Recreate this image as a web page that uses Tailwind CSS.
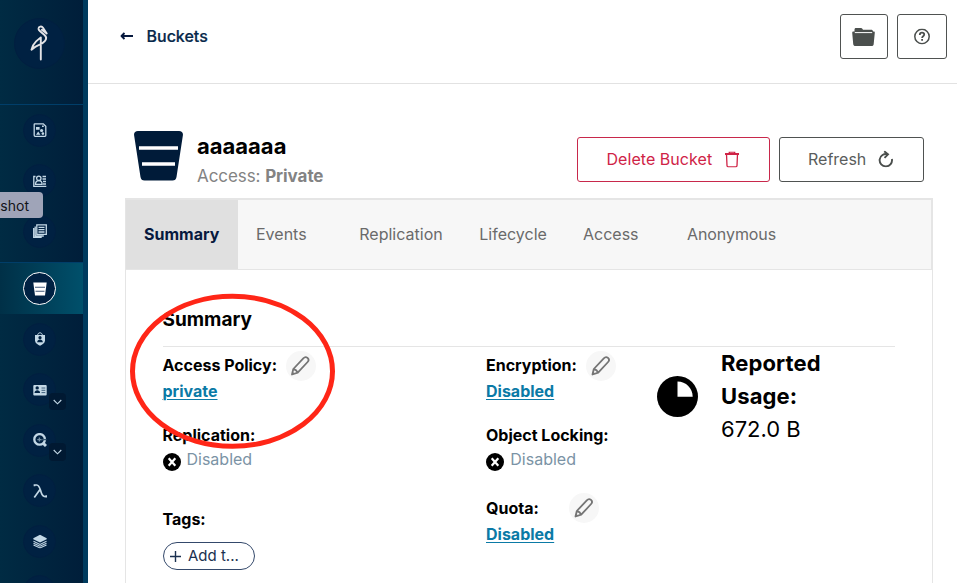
<!DOCTYPE html>
<html lang="en">
<head>
<meta charset="utf-8">
<title>Buckets</title>
<script src="https://cdn.jsdelivr.net/npm/@tailwindcss/browser@4"></script>
</head>
<body class="w-[957px] h-[583px] overflow-hidden bg-white font-['Inter',sans-serif] text-base text-black">
<svg class="hidden">
  <symbol id="pencil" viewBox="0 0 20 20"><path d="M1.500 18.500 2.800 13 12.800 2.300c1.400-1.500 3-1.400 4.200-.4 1.300 1.200 1.300 2.800.1 4.100L7.200 16.700ZM2.800 13c1.700.4 3.600 1.700 4.400 3.700" fill="none" stroke="currentColor" stroke-width="1.800" stroke-linejoin="round"/><path d="m1.500 18.500.6-2.800 2.300 2Z" fill="currentColor"/></symbol>
  <symbol id="off" viewBox="0 0 18 18"><circle cx="9" cy="9" r="9"/><path d="m5.700 5.200 6.600 7.600m0-7.600-6.600 7.600" stroke="#fff" stroke-width="2.200"/></symbol>
</svg>
<div class="relative flex h-[583px] overflow-hidden">
  <aside class="relative flex w-[88px] shrink-0 flex-col overflow-hidden border-r-[5px] border-[#003b5e] bg-linear-to-r from-[#002b43] to-[#001e3a] text-[#c3d8e6]">
    <div class="h-[105px] shrink-0 border-b border-[#003e69] pl-[14px] pt-[18px]">
      <div class="size-[51px] rounded-full border border-[#001f40] bg-[#002142]">
        <svg class="size-[49px]" viewBox="0 0 49 49" fill="none" stroke="#e3e3e6" stroke-width="1.900" stroke-linejoin="round" stroke-linecap="round"><path d="M31.700 14.500 28 8.700c-1.300-1.900-4.600-1.300-4.500 1.200.1 1 .8 1.700 1.600 2.400l4.400 3.700c1.900 1.700 2 4.200.3 6.200-1.300 1.500-3 2.600-5.200 3.500-2.600 1-5 2.400-8.100 5 .8-3.400 2.200-6 4.600-8.300l4.700-4V40.500M26.800 10.800l4.900 3.700" /></svg>
      </div>
    </div>
    <nav class="flex flex-col">
      <a class="flex h-[50px] shrink-0 items-center pl-[23px]"><span class="grid size-[33px] place-items-center rounded-full border border-[#001f40] bg-[#002142]"><svg class="size-[14px]" viewBox="0 0 14 14"><path d="M1.700.8h8.600l2.500 2.500v9.200c0 .5-.3.800-.9.800H2.200c-.7 0-1-.4-1-1V1.500c0-.4.200-.7.500-.7Z" fill="none" stroke="currentColor" stroke-width="1.300"/><path d="M3 4h3.600v2.800H3zM3 11.700l2.200-3.200 2.200 3.200zM9 2.500h1.800v1.600H9z" fill="currentColor"/><circle cx="8.600" cy="7.500" r="1.600" fill="currentColor"/><circle cx="9.900" cy="10.600" r="1.300" fill="currentColor"/></svg></span></a>
      <a class="flex h-[51px] shrink-0 items-center pl-[23px]"><span class="grid size-[33px] place-items-center rounded-full border border-[#001f40] bg-[#002142]"><svg class="size-[14px]" viewBox="0 0 14 14" fill="none" stroke="currentColor" stroke-width="1.300"><path d="M2.500 2.500H.8v9.800h12.500M9.500 2.500H13M9.500 5H13M10 7.500h3M10 10h3"/><circle cx="5.800" cy="4.300" r="2.200"/><path d="M2.500 10.300c0-2.400 1.300-3.700 3.300-3.700s3.300 1.300 3.300 3.700Z"/></svg></span></a>
      <a class="flex h-[50px] shrink-0 items-center pl-[23px]"><span class="grid size-[33px] place-items-center rounded-full border border-[#001f40] bg-[#002142]"><svg class="size-[14px]" viewBox="0 0 14 14" fill="none" stroke="currentColor" stroke-width="1.300"><path d="M3.800.8h9.500v9.500H3.800zM5.500 3.300h6M5.500 5.600h6M5.500 8h6M2.200 2.500v9.500h8.600M.7 4v9.400h8"/></svg></span></a>
      <a class="mt-[6px] flex h-[52px] shrink-0 items-center border-t border-[#003e69] bg-linear-to-r from-[#003047] to-[#00506b] pl-[23px]"><span class="grid size-[33px] place-items-center rounded-full border border-white bg-[#002142]"><svg class="size-[14px]" viewBox="0 0 14 14"><path d="M.3.500h13.400l-1.700 13H2z" fill="#fff"/><path d="M2 5.200h10M2.500 9.200h9" stroke="#405878" stroke-width="1.100"/></svg></span></a>
      <a class="flex h-[50px] shrink-0 items-center pl-[23px]"><span class="grid size-[33px] place-items-center rounded-full border border-[#001f40] bg-[#002142]"><svg class="size-[14px]" viewBox="0 0 14 14"><path d="M4.600 3.500c0-3.600 4.800-3.600 4.800 0" fill="none" stroke="currentColor"/><path d="M2 2.900h10v5.600c0 2.400-2.400 4.100-5 5.300-2.600-1.200-5-2.900-5-5.300z" fill="currentColor"/><circle cx="7" cy="5.700" r="1.600" fill="#002142"/><path d="M4.200 10.200c0-3.600 5.600-3.600 5.600 0z" fill="#002142"/></svg></span></a>
      <a class="relative flex h-[51px] shrink-0 items-center pl-[23px]"><span class="grid size-[33px] place-items-center rounded-full border border-[#001f40] bg-[#002142]"><svg class="size-[14px]" viewBox="0 0 14 14"><rect x=".3" y="2" width="13.400" height="10.400" rx="1" fill="currentColor"/><circle cx="4.200" cy="4.900" r="1.700" fill="#002142"/><path d="M1.500 10c0-3.700 5.600-3.700 5.600 0z" fill="#002142"/><path d="M8.500 5h3.800M8.500 7.300h3.800M8.500 9.600h3.800" stroke="#315473" stroke-width=".9"/></svg></span><span class="absolute left-[49px] top-[29px] grid size-[17px] place-items-center rounded-sm bg-[#001932]"><svg class="h-[6px] w-[9px]" viewBox="0 0 9 6"><path d="m.7 1 3.800 3.800L8.300 1" fill="none" stroke="currentColor" stroke-width="1.100"/></svg></span></a>
      <a class="relative flex h-[50px] shrink-0 items-center pl-[23px]"><span class="grid size-[33px] place-items-center rounded-full border border-[#001f40] bg-[#002142]"><svg class="size-[14px]" viewBox="0 0 14 14" fill="none" stroke="currentColor"><circle cx="6.600" cy="6.400" r="5.300" stroke-width="2.300"/><path d="m10 10 3 3" stroke-width="3"/><path d="M4.300 6.600h4.500M6.400 4.600v4" stroke-width="1.400" opacity=".6"/><path d="M8.500 6.600h5" stroke="#36566f" stroke-width="1.300"/></svg></span><span class="absolute left-[49px] top-[28px] grid h-[18px] w-[17px] place-items-center rounded-sm bg-[#001932]"><svg class="h-[6px] w-[9px]" viewBox="0 0 9 6"><path d="m.7 1 3.800 3.800L8.300 1" fill="none" stroke="currentColor" stroke-width="1.100"/></svg></span></a>
      <a class="flex h-[51px] shrink-0 items-center pl-[23px]"><span class="grid size-[33px] place-items-center rounded-full border border-[#001f40] bg-[#002142]"><svg class="size-[14px]" viewBox="0 0 14 14" fill="none" stroke="currentColor" stroke-width="1.700"><path d="M1.500 2.300V1h2.200C6.400 1 7 5 8.300 8.700c1 3.100 1.900 4.200 4.900 4v-1.500M7 5.500 1.300 13.500"/></svg></span></a>
      <a class="flex h-[50px] shrink-0 items-center pl-[23px]"><span class="grid size-[33px] place-items-center rounded-full border border-[#001f40] bg-[#002142]"><svg class="size-[14px] translate-y-[.5px]" viewBox="0 0 14 14"><path d="m7 .3 6.700 3.500v1L7 8 .3 4.800v-1Z" fill="currentColor"/><path d="M.5 6.700 7 9.900l6.500-3.200M.5 8.700 7 11.700l6.500-3M.5 10.600 7 13.500l6.500-2.900" fill="none" stroke="currentColor" stroke-width="1.100"/></svg></span></a>
      <a class="flex h-[50px] shrink-0 pl-[23px] pt-[9px]"><span class="size-[33px] rounded-full border border-[#001f40] bg-[#002142]"></span></a>
    </nav>
    <div class="absolute left-0 top-[192px] flex h-[26px] w-[43px] items-center justify-end overflow-hidden rounded-r-[4px] bg-[#9fa4b8] pr-[14px] text-[14px] text-[#111319]">nshot</div>
  </aside>

  <div class="flex min-w-0 flex-1 flex-col">
    <header class="flex h-[84px] shrink-0 items-start border-b border-[#e2e2e2] pl-[32px] pr-[10px] pt-[14px]">
      <a class="flex h-[44px] items-center font-medium text-[#07284a]">
        <svg class="mr-[12.500px] h-[9px] w-[14px] -translate-y-[.5px]" viewBox="0 0 14 9"><path d="M1.500 4.500H13M4.500 1.500l-3 3 3 3" fill="none" stroke="#07193e" stroke-width="1.900" stroke-linejoin="round"/></svg>
        <span class="[-webkit-text-stroke:.2px]">Buckets</span>
      </a>
      <div class="ml-auto flex gap-[9px]">
        <button class="grid h-[45px] w-[48px] place-items-center rounded-[3px] border border-[#4f5251] text-[#4b4f4d]"><svg class="h-[20px] w-[24px] -translate-x-[.5px]" viewBox="0 0 24 20"><path d="M3 4.500V2.700C3 1.600 3.500 1 4.500 1H9c1 0 1.500.3 2 1l.5.700h8c1.200 0 2 .6 2 1.800h1c.6.1.9.5.8 1.200L22.200 17c-.1 1.400-.9 2-2.200 2H4c-1.300 0-2.100-.6-2.300-2L.7 5.700c0-.7.3-1.100.9-1.200z" fill="currentColor"/><path d="M3.300 5.600h17.400" stroke="#fff" stroke-width="1"/></svg></button>
        <button class="grid h-[45px] w-[50px] place-items-center rounded-[3px] border border-[#4f5251] text-[#4b4f4d]"><svg class="size-[16px] -translate-y-[.5px]" viewBox="0 0 16 16" fill="none" stroke="currentColor"><circle cx="8" cy="8" r="7.200" stroke-width="1.500"/><path d="M5.800 6.400c0-1.500.9-2.200 2.200-2.200s2.200.7 2.200 1.900c0 1.700-2.100 1.700-2.100 3.400M8.100 10.600v1.700" stroke-width="1.800"/></svg></button>
      </div>
    </header>

    <main class="flex flex-1 flex-col pl-[37px] pr-[24px] pt-[46px]">
      <div class="flex h-[68px] shrink-0 items-start pl-[9px] pr-[9px]">
        <svg class="mt-px h-[50px] w-[49px]" viewBox="0 0 49 50"><path d="M4 0h41c2.700 0 4.300 1.700 3.900 4.200L42.500 46c-.4 2.500-1.700 3.500-4 3.500h-28c-2.300 0-3.600-1-4-3.500L.1 4.200C-.3 1.700 1.300 0 4 0Z" fill="#001b39"/><path d="M5 17h39M8 33h33" stroke="#fff" stroke-width="3.700"/></svg>
        <div class="ml-[14px] flex flex-col">
          <h1 class="h-[32px] text-[22px] font-bold leading-[32px]">aaaaaaa</h1>
          <p class="h-[26px] translate-y-px text-[17px] leading-[26px] tracking-[-.004em] text-[#838383]">Access: <b>Private</b></p>
        </div>
        <div class="ml-auto mt-[7px] flex gap-[9px]">
          <button class="flex h-[45px] w-[193px] items-center rounded-[3px] border border-[#c8284b] pl-[28.500px] text-[#cf2346]"><span class="-translate-y-px tracking-[.003em]">Delete Bucket</span><svg class="ml-auto mr-[30px] h-[16px] w-[14px] -translate-y-[.5px]" viewBox="0 0 14 16" fill="none" stroke="currentColor" stroke-width="1.300"><path d="M0 2.500h14" stroke-width="1.800"/><path d="M4.300 2V.7h5.400V2M1.500 2.500l.5 11.600c0 .8.500 1.300 1.300 1.300h7.400c.8 0 1.300-.5 1.300-1.300l.5-11.600"/></svg></button>
          <button class="flex h-[45px] w-[145px] items-center rounded-[3px] border border-[#4f5251] pl-[28px] text-[#5a5d5c]"><span class="-translate-y-px">Refresh</span><svg class="ml-auto mr-[30px] h-[17px] w-[15px] -translate-y-[.5px]" viewBox="0 0 15 17" fill="none" stroke="#4b4f4d" stroke-width="1.900"><path d="M13.900 8.500A6.200 6.200 0 1 1 9.700 3.800"/><path d="m6.200.8 3.800 3-3.500 3.600"/></svg></button>
        </div>
      </div>

      <section class="flex flex-1 flex-col border-x border-[#e5e5e5]">
        <div class="-mr-px flex h-[72px] shrink-0 items-stretch border-b border-r-2 border-t-2 border-[#e5e5e5] bg-[#f7f7f7] leading-[69px] text-[#6a6a6a]">
          <a class="w-[112px] bg-[#e0e0e0] pl-[18px] font-bold text-[#07193e]">Summary</a>
          <a class="w-[103px] pl-[18px]">Events</a>
          <a class="w-[120px] pl-[18.300px]">Replication</a>
          <a class="w-[104px] pl-[18.300px]">Lifecycle</a>
          <a class="w-[104px] pl-[18px]">Access</a>
          <a class="pl-[18px] tracking-[-.005em]">Anonymous</a>
        </div>
        <div class="mx-[37px] h-[77px] shrink-0 border-b border-[#e5e5e5] pt-[36px]"><h2 class="-translate-x-[.5px] text-[19px] font-bold leading-[28px]">Summary</h2></div>
        <div class="flex pl-[36.500px]">
          <div class="w-[323.500px]">
            <div class="flex h-[37px] items-center font-bold"><span class="-translate-y-px">Access Policy:</span><span class="ml-[9px] grid size-[30px] place-items-center rounded-full bg-[#f7f7f7] text-[#757575]"><svg class="size-[20px] -translate-x-[.5px]"><use href="#pencil"/></svg></span></div>
            <a class="-mt-[7px] block h-[39px] font-bold leading-[28px] text-[#0b7aa6] underline decoration-1 underline-offset-2">private</a>
            <div class="mt-[6px] h-[27px] font-bold leading-[26px]">Replication:</div>
            <div class="flex h-[24px] items-center text-[#7b93a5]"><svg class="mr-[6px] mt-[1px] size-[18px] text-black"><use href="#off"/></svg><span class="-mt-[4px]">Disabled</span></div>
            <div class="mt-[32px] h-[29px] font-bold leading-[28px]">Tags:</div>
            <button class="mt-[8px] flex h-[28px] w-[92px] items-center rounded-full border border-[#34496b] pl-[6px] text-[15px] text-[#1b3150]"><svg class="mr-[7.500px] size-[11px]" viewBox="0 0 11 11"><path d="M5.500 0v11M0 5.500h11" stroke="currentColor" stroke-width="1.400"/></svg><span>Add t...</span></button>
          </div>
          <div class="w-[171px]">
            <div class="flex h-[37px] items-center font-bold"><span class="-translate-y-px">Encryption:</span><span class="ml-[9px] grid size-[30px] place-items-center rounded-full bg-[#f7f7f7] text-[#757575]"><svg class="size-[20px]"><use href="#pencil"/></svg></span></div>
            <a class="-mt-[7px] block h-[39px] font-bold leading-[28px] text-[#0b7aa6] underline decoration-1 underline-offset-2">Disabled</a>
            <div class="mt-[6px] h-[27px] font-bold leading-[26px]">Object Locking:</div>
            <div class="flex h-[24px] items-center text-[#7b93a5]"><svg class="mr-[6px] mt-[1px] size-[18px] text-black"><use href="#off"/></svg><span class="-mt-[4px] pl-[.3px]">Disabled</span></div>
            <div class="mt-[16px] flex h-[38px] items-center font-bold"><span class="w-[83px]">Quota:</span><span class="grid size-[30px] place-items-center rounded-full bg-[#f7f7f7] text-[#757575]"><svg class="size-[20px]"><use href="#pencil"/></svg></span></div>
            <a class="-mt-[7px] block h-[38px] font-bold leading-[28px] text-[#0b7aa6] underline decoration-1 underline-offset-2">Disabled</a>
          </div>
          <svg class="mt-[29px] size-[41px]" viewBox="0 0 41 41"><circle cx="20.500" cy="20.500" r="20.500"/><path d="M20.500 5.500v15.200h15.200c0-8.500-6.700-15.200-15.200-15.200Z" fill="#fff"/></svg>
          <div class="ml-[23px] w-[150px] text-[22px] leading-[33px]"><b class="block w-[110px] tracking-[.005em]">Reported Usage:</b><span>672.0 B</span></div>
        </div>
      </section>
    </main>
  </div>
  <svg class="pointer-events-none absolute left-[129px] top-[292px] h-[158px] w-[208px]" viewBox="0 0 208 158"><ellipse cx="103.500" cy="79.300" rx="100" ry="75" fill="none" stroke="#ff2617" stroke-width="5"/></svg>
</div>
</body>
</html>
